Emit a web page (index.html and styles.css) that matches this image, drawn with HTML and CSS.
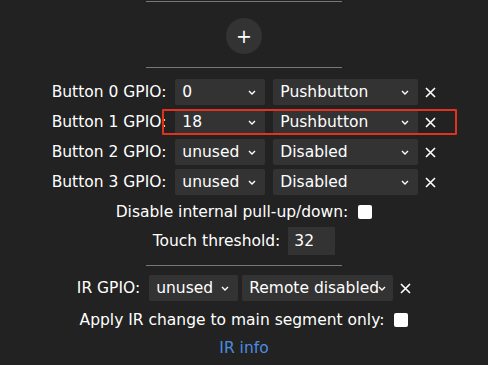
FILE: index.html
```html
<!DOCTYPE html>
<html lang="en">
<head>
<meta charset="utf-8" />
<title>Button setup</title>
<link rel="stylesheet" href="styles.css">
</head>
<body>
<div class="page">
	<hr class="sep first">
	<div class="addrow"><button class="add" type="button">+</button></div>
	<hr class="sep mid">
	<div class="btns">
		<div class="row">
			<label>Button 0 GPIO:</label>
			<select class="pin"><option>0</option></select>
			<select class="type"><option>Pushbutton</option></select>
			<svg class="del" viewBox="0 0 11 11"><path d="M1 1L10 10M10 1L1 10"/></svg>
		</div>
		<div class="row">
			<label>Button 1 GPIO:</label>
			<select class="pin"><option>18</option></select>
			<select class="type"><option>Pushbutton</option></select>
			<svg class="del" viewBox="0 0 11 11"><path d="M1 1L10 10M10 1L1 10"/></svg>
		</div>
		<div class="row">
			<label>Button 2 GPIO:</label>
			<select class="pin"><option>unused</option></select>
			<select class="type"><option>Disabled</option></select>
			<svg class="del" viewBox="0 0 11 11"><path d="M1 1L10 10M10 1L1 10"/></svg>
		</div>
		<div class="row">
			<label>Button 3 GPIO:</label>
			<select class="pin"><option>unused</option></select>
			<select class="type"><option>Disabled</option></select>
			<svg class="del" viewBox="0 0 11 11"><path d="M1 1L10 10M10 1L1 10"/></svg>
		</div>
		<div class="mark"></div>
	</div>
	<div class="line chk">
		<label>Disable internal pull-up/down:</label>
		<input type="checkbox">
	</div>
	<div class="line touch">
		<label>Touch threshold:</label>
		<input type="text" value="32">
	</div>
	<hr class="sep last">
	<div class="row ir">
		<label>IR GPIO:</label>
		<select class="pin"><option>unused</option></select>
		<select class="remote"><option>Remote disabled</option></select>
		<svg class="del" viewBox="0 0 11 11"><path d="M1 1L10 10M10 1L1 10"/></svg>
	</div>
	<div class="line chk apply">
		<label>Apply IR change to main segment only:</label>
		<input type="checkbox">
	</div>
	<div class="line info"><a href="#">IR info</a></div>
</div>
</body>
</html>
```

FILE: styles.css
```css
*{box-sizing:border-box;}
html, body{margin:0; padding:0; background:#222; color:#fff; height:100%;}
body{font-family:"DejaVu Sans", Verdana, sans-serif; font-size:15.5px; text-align:center; overflow:hidden;}
.page{width:488px;}
.sep{width:196px; height:0; border:none; border-top:1px solid #777; margin:0 auto;}
.sep.first{margin-top:1px;}
.sep.mid{margin-top:13px;}
.sep.last{margin-top:10px;}
.addrow{margin-top:16px; height:36px; display:flex; justify-content:center;}
.add{width:36px; height:36px; border-radius:50%; border:none; background:#333; color:#fff; font-family:"DejaVu Sans", sans-serif; font-size:19px; font-weight:normal; line-height:36px; padding:0;}
.btns{position:relative; margin-top:9px;}
.row{height:30px; display:flex; align-items:center; justify-content:center;}
.row label{margin-right:9px;}
select{appearance:none; -webkit-appearance:none; background:#333 url("data:image/svg+xml,%3Csvg xmlns='http://www.w3.org/2000/svg' width='8' height='5' viewBox='0 0 8 5'%3E%3Cpath d='M1 1l3 3 3-3' fill='none' stroke='%23fff' stroke-width='1.4'/%3E%3C/svg%3E") no-repeat; color:#fff; border:none; border-radius:2px; height:26px; font-family:inherit; font-size:inherit; padding:0 20px 0 7px; margin:0;}
select.pin{width:90px; background-position:right 9px center;}
select.type{width:145px; margin-left:8px; background-position:right 9px center;}
select.remote{width:151px; margin-left:4px; background-position:right 7px center; padding-right:14px;}
.row.ir select.pin{width:89px;}
.del{width:11px; height:11px; margin-left:7px; stroke:#fff; stroke-width:1.6; fill:none;}
.line{display:flex; align-items:center; justify-content:center;}
.line.chk{height:30px;}
.line.chk label{margin-right:10px;}
input[type="checkbox"]{appearance:none; -webkit-appearance:none; width:14px; height:14px; margin:0; background:#fff; border-radius:2px;}
.line.touch{height:28px;}
.line.touch label{margin-right:8px;}
.line.touch input{width:47px; height:28px; background:#333; color:#fff; border:none; border-radius:0; font-family:inherit; font-size:inherit; padding:0 6px; margin:0;}
.row.ir{margin-top:7px;}
.line.apply{height:32px; margin-top:1px;}
.line.info{height:24px;}
.info a{color:#4a8de0; text-decoration:none;}
.mark{position:absolute; left:162px; top:32px; width:295px; height:26px; border:2px solid #e2321f; border-radius:1px;}
```
